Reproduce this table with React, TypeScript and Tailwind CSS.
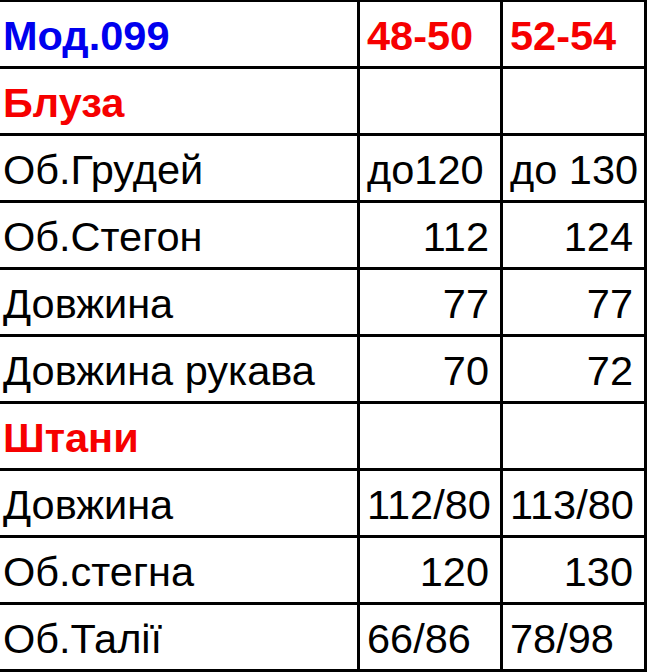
import React from "react";

type Cell = { text: string; align?: "left" | "right"; cls?: string };
type Row = { label: string; labelCls?: string; a: Cell; b: Cell };

const rows: Row[] = [
  {
    label: "Мод.099",
    labelCls: "font-bold text-[#0000ee]",
    a: { text: "48-50", align: "left", cls: "font-bold text-[#f60000]" },
    b: { text: "52-54", align: "left", cls: "font-bold text-[#f60000]" },
  },
  { label: "Блуза", labelCls: "font-bold text-[#f60000]", a: { text: "" }, b: { text: "" } },
  { label: "Об.Грудей", a: { text: "до120", align: "left" }, b: { text: "до 130", align: "left" } },
  { label: "Об.Стегон", a: { text: "112", align: "right" }, b: { text: "124", align: "right" } },
  { label: "Довжина", a: { text: "77", align: "right" }, b: { text: "77", align: "right" } },
  { label: "Довжина рукава", a: { text: "70", align: "right" }, b: { text: "72", align: "right" } },
  { label: "Штани", labelCls: "font-bold text-[#f60000]", a: { text: "" }, b: { text: "" } },
  { label: "Довжина", a: { text: "112/80", align: "left" }, b: { text: "113/80", align: "left" } },
  { label: "Об.стегна", a: { text: "120", align: "right" }, b: { text: "130", align: "right" } },
  { label: "Об.Талії", a: { text: "66/86", align: "left" }, b: { text: "78/98", align: "left" } },
];

function ValueCell({ c, w }: { c: Cell; w: string }) {
  const right = c.align === "right";
  return (
    <div
      className={`${w} h-full border-r-[3px] border-black flex items-center pt-[4px] ${
        right ? "justify-end pr-[11px]" : "justify-start pl-[7px]"
      } whitespace-nowrap overflow-hidden ${c.cls ?? "text-black"}`}
    >
      {c.text}
    </div>
  );
}

export default function App() {
  return (
    <div
      className="w-[651px] h-[672px] bg-white overflow-hidden text-[41.5px] leading-none"
      style={{ fontFamily: '"Liberation Sans", Arial, sans-serif' }}
    >
      <div className="w-[647px] border-t-[2px] border-black">
        {rows.map((r, i) => (
          <div key={i} className="flex h-[67px] border-b-[3px] border-black">
            <div
              className={`w-[360px] h-full border-r-[3px] border-black flex items-center pt-[4px] pl-[3px] whitespace-nowrap ${
                r.labelCls ?? "text-black"
              }`}
            >
              {r.label}
            </div>
            <ValueCell c={r.a} w="w-[143px]" />
            <ValueCell c={r.b} w="w-[144px]" />
          </div>
        ))}
      </div>
    </div>
  );
}
